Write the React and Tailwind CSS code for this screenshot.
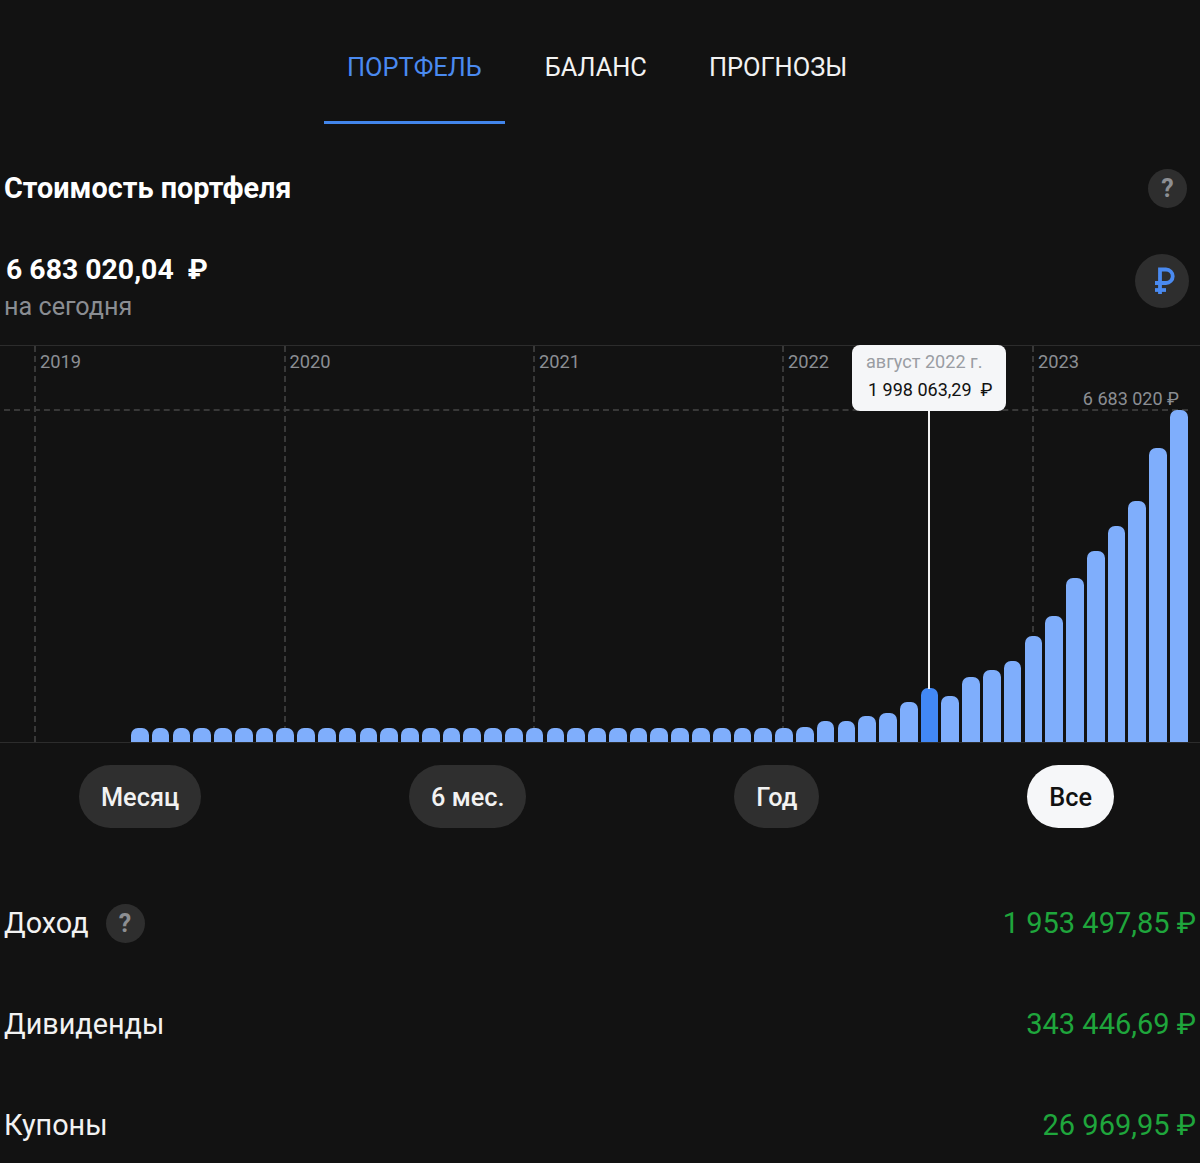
const tops = [...Array(32).fill(728), 727, 721, 721, 716, 713, 701.5, 688, 696, 677, 670, 661, 636, 616, 578, 551, 526, 501, 448, 410];
const years = [["2019", 34], ["2020", 283.5], ["2021", 533], ["2022", 782], ["2023", 1032]];

function Help() {
  return (
    <div className="flex h-[39px] w-[39px] items-center justify-center rounded-full bg-[#2e2e2e] text-[25px] font-bold text-[#8d8f93]">?</div>
  );
}

function Row({ label, value, help }) {
  return (
    <div className="flex h-[101px] items-center justify-between pl-[4px] pr-[4px]">
      <div className="flex items-center gap-[17px]">
        <span className="text-[28.8px] text-[#f2f2f2]">{label}</span>
        {help && <Help />}
      </div>
      <span className="text-[29px] text-[#1fa63c]">{value}</span>
    </div>
  );
}

function Pill({ children, active }) {
  return (
    <button className={"flex h-[63px] items-center rounded-full px-[22px] pt-[2px] text-[25.3px] font-medium " + (active ? "bg-[#f6f7f9] text-[#111111]" : "bg-[#2f2f2f] text-[#f2f2f2]")}>
      {children}
    </button>
  );
}

export default function App() {
  return (
    <div className="h-[1163px] w-[1200px] overflow-hidden bg-[#121212] font-['Roboto',sans-serif]">
      <nav className="flex h-[124px] gap-[17px] pl-[324px] text-[25.4px] leading-none text-[#f2f2f2]">
        <div className="flex h-full flex-col border-b-[3px] border-[#4285ea] px-[23px] pt-[55px] text-[#4a8af0]">ПОРТФЕЛЬ</div>
        <div className="flex h-full px-[23px] pt-[55px]">БАЛАНС</div>
        <div className="flex h-full px-[22px] pt-[55px]">ПРОГНОЗЫ</div>
      </nav>

      <div className="flex h-[130px] items-start justify-between pl-[4px] pr-[13px] pt-[45px]">
        <h1 className="text-[28.8px] font-bold leading-[39px] text-white">Стоимость портфеля</h1>
        <Help />
      </div>

      <div className="flex h-[91px] items-start justify-between pl-[4px] pr-[11px]">
        <div>
          <div className="pl-[2px] text-[28.4px] font-bold leading-[32px] text-white whitespace-pre">6 683 020,04  ₽</div>
          <div className="text-[25.2px] leading-[42px] text-[#8a8d92]">на сегодня</div>
        </div>
        <div className="flex h-[54px] w-[54px] items-center justify-center rounded-full bg-[#2e2e2e]">
          <svg width="54" height="54" viewBox="0 0 54 54" fill="none" stroke="#4a8af0" strokeWidth="3.8">
            <path d="M25 40V15.5h6a6.5 6.5 0 0 1 0 13.5H20" />
            <path d="M20 36h11" />
          </svg>
        </div>
      </div>

      <section className="relative h-[398px] border-y border-[#2c2c2c]">
        {years.map(([y, x]) => (
          <div key={y} className="absolute top-0 h-full border-l-2 border-dashed border-[#383838]" style={{ left: x }}>
            <span className="absolute left-[4px] top-[4px] text-[18.3px] leading-[24px] text-[#8b8e93]">{y}</span>
          </div>
        ))}
        <div className="absolute left-[4px] right-[12px] top-[63px] border-t-2 border-dashed border-[#383838]" />
        <span className="absolute right-[21px] top-[41px] text-[18px] leading-[24px] text-[#8b8e93]">6 683 020 ₽</span>

        <div className="absolute bottom-0 left-0 right-0 flex h-full items-end justify-end gap-[3.1px] pr-[12.3px]">
          {tops.map((t, i) => (
            <div
              key={i}
              className={"w-[17.7px] rounded-t-[7px] " + (i === 38 ? "bg-[#4288f5]" : "bg-[#7faefc]")}
              style={{ height: 742 - t }}
            />
          ))}
        </div>

        <div className="absolute left-[928px] top-[65px] h-[278px] w-[2px] bg-[#f2f2f2]" />
        <div className="absolute left-[852px] top-[-1px] h-[66px] w-[154px] rounded-[8px] bg-[#f5f6f8] pl-[14px] pt-[5px]">
          <div className="text-[18.1px] leading-[24px] text-[#9a9da3]">август 2022 г.</div>
          <div className="mt-[4px] pl-[2px] text-[18px] leading-[24px] text-[#111111] whitespace-pre">1 998 063,29  ₽</div>
        </div>
      </section>

      <div className="flex h-[108px] items-start justify-between pl-[79px] pr-[86px] pt-[22px]">
        <Pill>Месяц</Pill>
        <Pill>6 мес.</Pill>
        <Pill>Год</Pill>
        <Pill active>Все</Pill>
      </div>

      <div className="pt-[22px]">
        <Row label="Доход" value="1 953 497,85 ₽" help />
        <Row label="Дивиденды" value="343 446,69 ₽" />
        <Row label="Купоны" value="26 969,95 ₽" />
      </div>
    </div>
  );
}
